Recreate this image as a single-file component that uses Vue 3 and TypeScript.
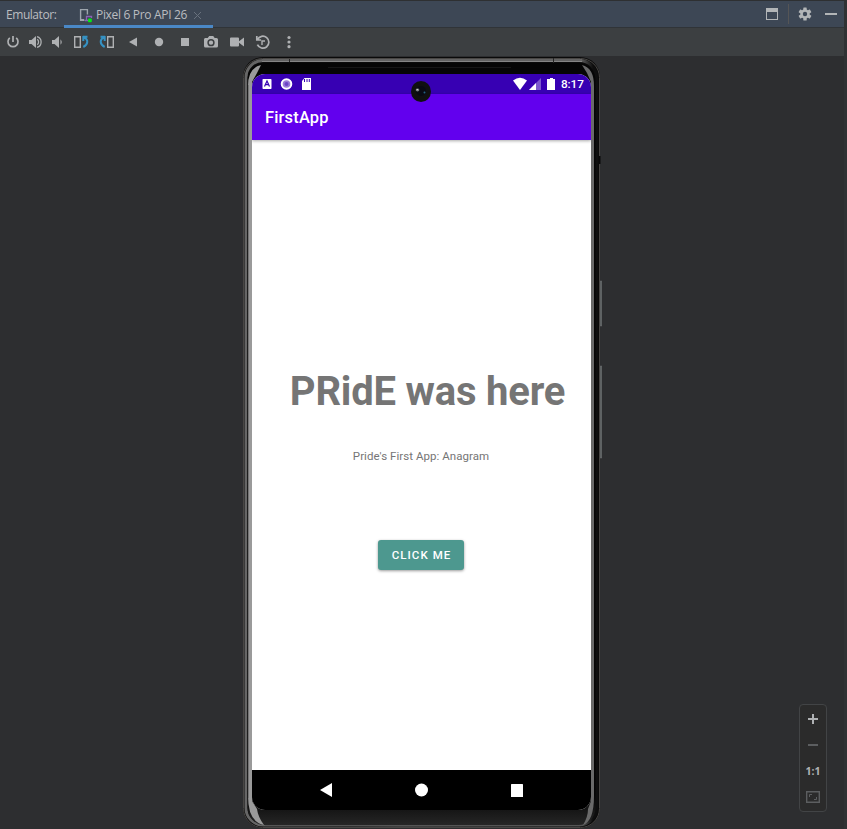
<script setup lang="ts">
import { ref } from 'vue'

const deviceName = ref('Pixel 6 Pro API 26')
const clock = ref('8:17')
</script>

<template>
  <div class="window">
    <header class="tabs">
      <span class="label">Emulator:</span>
      <div class="tab">
        <svg class="tab-icon" width="14" height="15" viewBox="0 0 14 15">
          <path d="M5.500 12.200H1.600V1.600H8.400V6.500" fill="none" stroke="#9da5ad" stroke-width="1.400" />
          <path d="M1 11h4v2H1z" fill="#9da5ad" />
          <path d="M7.500 12V8.500H12.500V10M6 12.500H9" fill="none" stroke="#8a63b5" stroke-width="1.300" />
          <rect x="9" y="10.500" width="3.800" height="3.700" rx="1" fill="#00ed16" />
        </svg>
        <span class="tab-name">{{ deviceName }}</span>
        <svg class="close" width="9" height="9" viewBox="0 0 9 9"><path d="M1 1l7 7M8 1L1 8" stroke="#68717d" /></svg>
      </div>
      <div class="window-tools">
        <svg width="12" height="12" viewBox="0 0 12 12"><path d="M0 0h12v12H0zM1 4v7h10V4z" fill="#b2b5b7" fill-rule="evenodd" /></svg>
        <i class="divider"></i>
        <svg class="gear" width="14" height="14" viewBox="0 0 14 14">
          <g fill="#b2b5b7"><rect v-for="a in [0, 60, 120]" :key="a" x="5.300" y=".5" width="3.400" height="13" rx=".5" :transform="`rotate(${a} 7 7)`" /></g>
          <circle cx="7" cy="7" r="3.500" fill="none" stroke="#b2b5b7" stroke-width="2.400" />
          <circle cx="7" cy="7" r="2.200" fill="#3d4755" />
        </svg>
        <svg class="minimize" width="12" height="2" viewBox="0 0 12 2"><path d="M0 0h12v2H0z" fill="#b2b5b7" /></svg>
      </div>
    </header>

    <nav class="toolbar">
      <svg width="310" height="28" viewBox="0 0 310 28" fill="#afb1b3">
        <path d="M9.800 9.800a5 5 0 1 0 6.400 0M13 8v6" fill="none" stroke="#afb1b3" stroke-width="1.700" />
        <path d="M29 12h2.500L36 8v12l-4.500-4H29z" />
        <path d="M37.300 11.300a3.500 3.500 0 0 1 0 5.400M37 8.600a5.600 5.600 0 0 1 0 10.800" fill="none" stroke="#afb1b3" stroke-width="1.300" />
        <path d="M52 12h2.500L59 8v12l-4.500-4H52zM60.500 11.200q2.500 2.800 0 5.600z" />
        <path d="M74.700 8.700h5.600v10.600h-5.600z" fill="none" stroke="#afb1b3" stroke-width="1.400" />
        <path d="M83 8.800h4.500M83.300 8v5M84 9.300c4.500 2 4.500 7-.7 9.700" fill="none" stroke="#3592c4" stroke-width="2" />
        <path d="M107.700 8.700h5.600v10.600h-5.600z" fill="none" stroke="#afb1b3" stroke-width="1.400" />
        <path d="M105 8.800h-4.500M104.700 8v5M104 9.300c-4.500 2-4.500 7 .7 9.700" fill="none" stroke="#3592c4" stroke-width="2" />
        <path d="M137 9.500v9L129 14z" />
        <circle cx="159" cy="14" r="4.200" />
        <path d="M181 10h8v8h-8z" />
        <path d="M205.200 10h2.500l1.500-2h4l1.500 2h1.800q1.500 0 1.500 1.500V18q0 1.500-1.500 1.500h-11Q204 19.500 204 18v-6.500q0-1.500 1.200-1.500z" />
        <circle cx="211" cy="14.700" r="2.900" fill="#afb1b3" stroke="#3c3f41" stroke-width="1.500" />
        <path d="M231 9.500h7q1 0 1 1v2.700l5-3.700v9l-5-3.700v2.700q0 1-1 1h-7q-1 0-1-1v-7q0-1 1-1z" />
        <path d="M257.500 11.500a6 6 0 1 1-.1 5.200M256.800 8v4h4.300" fill="none" stroke="#afb1b3" stroke-width="1.700" />
        <path d="M262 17v-4h3" fill="none" stroke="#afb1b3" stroke-width="1.400" />
        <circle cx="289" cy="9.500" r="1.600" /><circle cx="289" cy="14" r="1.600" /><circle cx="289" cy="18.700" r="1.600" />
      </svg>
    </nav>

    <main class="workspace">
      <section class="phone">
        <svg class="body" width="361" height="773" viewBox="242 56 361 773">
          <defs>
            <linearGradient id="rim" x1="0" x2="1" y1="0" y2="0">
              <stop offset="0" stop-color="#666" /><stop offset=".3" stop-color="#555" />
              <stop offset=".45" stop-color="#777" /><stop offset=".8" stop-color="#555" />
              <stop offset=".96" stop-color="#555" /><stop offset=".99" stop-color="#0e0e0e" />
            </linearGradient>
            <linearGradient id="glass" x1="0" x2="0" y1="0" y2="1">
              <stop offset="0" stop-color="#050505" /><stop offset=".96" stop-color="#050505" /><stop offset="1" stop-color="#262626" />
            </linearGradient>
          </defs>
          <path d="M600.500 281h1v45h-1zM600.500 366h1v92h-1z" fill="#171717" stroke="#6f7273" stroke-width=".8" />
          <rect x="243" y="57" width="357" height="771" rx="20" fill="#0a0a0a" />
          <rect x="243.500" y="58.500" width="356" height="769" rx="19" fill="none" stroke="#484644" />
          <rect x="246" y="60.500" width="350.500" height="764.500" rx="17" fill="none" stroke="url(#rim)" stroke-width="3" />
          <path d="M262 59h320v3H262z" fill="#626262" />
          <path d="M262 61h320v1H262z" fill="#858585" />
          <rect x="247.500" y="63" width="348" height="762" rx="17" fill="url(#glass)" />
          <path d="M261 65Q248 68 248 86V796Q248 822 264 825Q258 817 257 809L252 801V82L257 73Z" fill="#9a9a9a" />
          <path d="M248.500 85V798" stroke="#757575" />
          <path d="M582 65Q594 68 594 86V796Q594 821 583 825Q588 817 588 809L591 801V82L587 73Z" fill="#6a6a6a" />
          <path d="M553.500 58v5M289.500 59v3" stroke="#252525" />
          <path d="M328 67.500h183" fill="none" stroke="#161616" />
          <path d="M265 825.500H578" stroke="#555" />
          <path d="M599 156h1.500v8h-1.500z" fill="#080808" />
        </svg>

        <div class="screen">
          <div class="status">
            <svg width="54" height="20" viewBox="0 0 54 20" fill="#fff">
              <rect x=".5" y="5" width="9" height="10" rx=".7" />
              <path d="M2.500 12.500L5 7L7.500 12.500M3.500 10.700h3" fill="none" stroke="#3700b3" stroke-width="1.200" />
              <circle cx="24.500" cy="10" r="4.800" fill="#9a7bd8" stroke="#fff" stroke-width="2" />
              <circle cx="24.500" cy="10" r="2" fill="#6b42c5" />
              <path d="M42.500 4H49v12h-9V7z" /><path d="M42.500 5v3M45 5v3M47.300 5v3" stroke="#3700b3" />
            </svg>
            <svg class="signals" width="46" height="20" viewBox="0 0 46 20" fill="#fff">
              <path d="M1 6.500Q8 1.200 15 6.500L8 16z" />
              <path d="M17 16L29 4v12z" opacity=".35" /><path d="M17 16L24 9v7z" />
              <path d="M38 4h3v1h2v11h-8V5h3z" />
            </svg>
            <span class="clock">{{ clock }}</span>
          </div>
          <div class="app-bar">FirstApp</div>
          <div class="content">
            <h1>PRidE was here</h1>
            <p>Pride's First App: Anagram</p>
            <button type="button">CLICK ME</button>
          </div>
          <div class="android-nav">
            <svg width="12" height="14" viewBox="0 0 12 14"><path d="M12 0v14L0 7z" fill="#fff" /></svg>
            <svg width="14" height="14" viewBox="0 0 14 14"><circle cx="6.500" cy="7" r="6.500" fill="#fff" /></svg>
            <svg width="12" height="13" viewBox="0 0 12 13"><rect width="12" height="13" rx=".5" fill="#fff" /></svg>
          </div>
        </div>
        <svg class="camera" width="20" height="21" viewBox="0 0 20 21">
          <ellipse cx="10" cy="10.500" rx="10" ry="10.500" fill="#101010" />
          <circle cx="10" cy="10" r="5" fill="#090a13" />
          <ellipse cx="6.500" cy="9" rx="1.800" ry="1.400" fill="#777b80" /><circle cx="6.300" cy="8.600" r=".7" fill="#ddd" />
          <circle cx="13.500" cy="11.500" r="1" fill="#266384" />
        </svg>
      </section>

      <aside class="zoom">
        <svg width="12" height="12" viewBox="0 0 12 12"><path d="M1 6h10M6 1v10" stroke="#afb1b3" stroke-width="2" /></svg>
        <svg width="12" height="12" viewBox="0 0 12 12"><path d="M1 6h10" stroke="#5c5e60" stroke-width="2" /></svg>
        <span>1:1</span>
        <svg width="14" height="12" viewBox="0 0 14 12"><path d="M.7.7h12.600v10.600H.7z" fill="none" stroke="#5c5e60" stroke-width="1.400" /><path d="M3.500 6V3.500H6M8 8.500h2.500V6" fill="none" stroke="#5c5e60" /></svg>
      </aside>
    </main>
  </div>
</template>

<style>
body {
  margin: 0;
  overflow: hidden;
}
</style>

<style scoped>
* {
  box-sizing: border-box;
}
svg {
  display: block;
  flex: none;
}
.window {
  width: 847px;
  height: 829px;
  background: #2d2e30;
  border-right: 3px solid #303234;
  border-top: 1px solid #2e3032;
  font-family: "Open Sans", "Noto Sans", sans-serif;
}
.tabs {
  height: 27px;
  display: flex;
  background: #3d4755;
  border-bottom: 1px solid #303438;
  color: #bbbdc0;
  font-size: 12px;
  line-height: 27px;
}
.label {
  width: 64px;
  padding-left: 6px;
  letter-spacing: -0.45px;
}
.tab {
  width: 149px;
  height: 27px;
  padding-left: 15px;
  display: flex;
  border-bottom: 3px solid #4a88c7;
}
.tab-icon {
  margin-top: 7px;
}
.tab-name {
  width: 97px;
  margin-left: 3px;
  letter-spacing: -0.32px;
  white-space: nowrap;
}
.close {
  margin-top: 10px;
}
.window-tools {
  margin-left: auto;
  padding-right: 7px;
  display: flex;
  align-items: center;
}
.divider {
  width: 1px;
  height: 20px;
  margin: 0 9px 0 10px;
  background: #555556;
}
.minimize {
  margin-left: 13px;
}
.toolbar {
  height: 28px;
  background: #3c3f41;
}
.workspace {
  height: 773px;
  display: flex;
  align-items: flex-start;
  overflow: hidden;
}
.phone {
  position: relative;
  width: 361px;
  height: 773px;
  margin-left: 242px;
  padding: 18px 0 0 10px;
}
.body {
  position: absolute;
  top: 0;
  left: 0;
}
.screen {
  position: relative;
  width: 339px;
  height: 736px;
  overflow: hidden;
  border-radius: 13px;
  background: #fff;
  font-family: Roboto, sans-serif;
}
.status {
  height: 20px;
  padding: 0 7px 0 10px;
  display: flex;
  background: #3700b3;
  color: #fff;
}
.signals {
  margin-left: auto;
}
.clock {
  width: 23px;
  margin-left: 3px;
  font-size: 11.800px;
  font-weight: 500;
  line-height: 21px;
  letter-spacing: -0.1px;
  white-space: nowrap;
}
.app-bar {
  position: relative;
  height: 46px;
  padding-left: 13px;
  background: #6200ee;
  box-shadow: 0 1px 3px #0005;
  color: #fff;
  font-size: 16.400px;
  font-weight: 500;
  letter-spacing: 0.2px;
  line-height: 48px;
}
.content {
  height: 630px;
  display: flex;
  flex-direction: column;
  align-items: center;
  background: #fff;
  color: #757575;
}
h1 {
  margin: 228px 0 0 12px;
  font-size: 40px;
  font-weight: 700;
  letter-spacing: -0.2px;
  line-height: 48px;
  white-space: nowrap;
}
p {
  margin: 32px 1px 0 0;
  font-size: 11.500px;
  letter-spacing: 0.05px;
  line-height: 16px;
  white-space: nowrap;
}
button {
  width: 86px;
  height: 30px;
  margin: 76px 1px 0 0;
  padding: 0 0 0 1px;
  border: 0;
  border-radius: 3px;
  background: #4d988f;
  box-shadow: 0 1px 3px #0006;
  color: #fff;
  font-family: Roboto, sans-serif;
  font-size: 11.500px;
  font-weight: 500;
  letter-spacing: 1.050px;
  line-height: 30px;
}
.android-nav {
  height: 40px;
  padding: 0 68px;
  display: flex;
  align-items: center;
  justify-content: space-between;
  background: #000;
}
.camera {
  position: absolute;
  top: 25px;
  left: 169px;
}
.zoom {
  width: 28px;
  height: 108px;
  margin: 648px 17px 0 auto;
  padding: 8px 0;
  display: flex;
  flex-direction: column;
  align-items: center;
  justify-content: space-between;
  background: #2b2b2b;
  border: 1px solid #424446;
  border-radius: 4px;
  color: #afb1b3;
}
.zoom span {
  font: 700 10.500px/12px "Open Sans", sans-serif;
}
</style>
